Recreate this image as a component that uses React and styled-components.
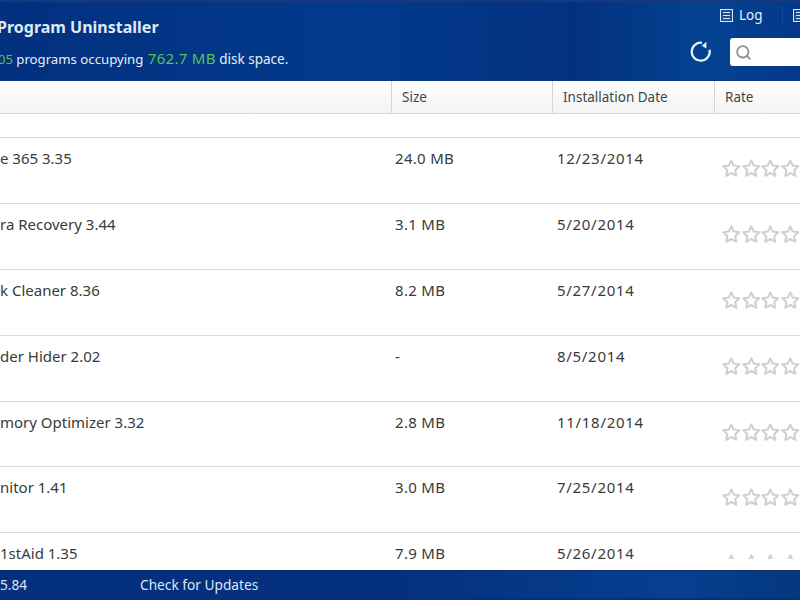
import React from "react";
import styled, { createGlobalStyle } from "styled-components";
import { Search } from "lucide-react";

const GlobalStyle = createGlobalStyle`
  html, body { margin: 0; padding: 0; height: 100%; overflow: hidden; background: #fff; }
  body { font-family: "Noto Sans", "DejaVu Sans", sans-serif; }
`;

const Page = styled.div`
  width: 800px;
  height: 600px;
  display: flex;
  flex-direction: column;
  overflow: hidden;
  color: #333;
`;

const Banner = styled.header`
  height: 81px;
  flex: none;
  display: flex;
  justify-content: space-between;
  box-sizing: border-box;
  border-top: 2px solid #17397c;
  border-bottom: 1px solid #0b3a84;
  background: linear-gradient(90deg, #03307f 0%, #023a8c 45%, #03317f 72%, #044391 88%, #03388a 100%);
  color: #e6eef8;
`;

const Titles = styled.div`
  display: flex;
  flex-direction: column;
  padding-top: 15px;
`;

const Title = styled.h1`
  margin: 0 0 0 -3px;
  font-size: 16px;
  line-height: 20px;
  font-weight: 700;
  color: #dfe9f5;
`;

const Summary = styled.div`
  margin-top: 12px;
  font-size: 13.2px;
  line-height: 18px;
  white-space: nowrap;
`;

const Green = styled.span`
  color: #55c25a;
  margin-left: ${(p) => (p.$big ? "1px" : "-2px")};
  font-size: ${(p) => (p.$big ? "15px" : "13px")};
  letter-spacing: ${(p) => (p.$big ? "0.3px" : "0")};
`;

const DiskLabel = styled.span`
  font-size: 13.5px;
`;

const Tools = styled.div`
  width: 80px;
  flex: none;
  display: flex;
  flex-direction: column;
  align-items: flex-start;
  padding-top: 5px;
`;

const Links = styled.div`
  display: flex;
  align-items: center;
  height: 16px;
`;

const LinkItem = styled.span`
  display: flex;
  align-items: center;
  gap: 6px;
  font-size: 13.5px;
  line-height: 16px;
  white-space: nowrap;
`;

const LinkDivider = styled.span`
  width: 1px;
  height: 18px;
  margin: 0 10px 0 19px;
  background: #1a4a94;
`;

const SearchRow = styled.div`
  display: flex;
  align-items: center;
  gap: 18px;
  margin-top: 15px;
  margin-left: -30px;
`;

const SearchBox = styled.div`
  width: 70px;
  height: 28px;
  flex: none;
  display: flex;
  align-items: center;
  padding-left: 5px;
  box-sizing: border-box;
  background: #fff;
  border-radius: 3px 0 0 3px;
  color: #8f8f88;
`;

const Grid = styled.div`
  flex: 1;
  min-height: 0;
  overflow: hidden;
`;

const HeadRow = styled.div`
  height: 33px;
  box-sizing: border-box;
  display: grid;
  grid-template-columns: 391px 161px 162px 86px;
  background: linear-gradient(#fff, #f3f3f3);
  border-bottom: 1px solid #d8d8d8;
`;

const HeadCell = styled.div`
  border-left: ${(p) => (p.$first ? "0" : "1px solid #d5d5d5")};
  padding-left: 10px;
  font-size: 13.5px;
  line-height: 33px;
  color: #444;
`;

const Spacer = styled.div`
  height: 23px;
  border-bottom: 1px solid #dcdcdc;
`;

const Row = styled.div`
  height: 65.9px;
  box-sizing: border-box;
  display: grid;
  grid-template-columns: 395px 162px 165px 78px;
  align-items: start;
  border-bottom: 1px solid #dcdcdc;
  overflow: hidden;
  font-size: 15px;
  line-height: 20px;
  color: #3a3a3a;
`;

const Cell = styled.div`
  padding-top: 10px;
  white-space: nowrap;
  letter-spacing: ${(p) => p.$spacing || "0"};
`;

const Stars = styled.div`
  display: flex;
  padding-top: 20px;
`;

const BottomGap = styled.div`
  height: 11px;
  flex: none;
  background: #fff;
`;

const Footer = styled.footer`
  height: 30px;
  flex: none;
  display: flex;
  align-items: center;
  box-sizing: border-box;
  border-top: 1px solid #0c2f72;
  border-bottom: 2px solid #0a2f78;
  background: linear-gradient(90deg, #04307f 0%, #04307f 50%, #05408f 85%, #04377f 100%);
  color: #dbe6f3;
  font-size: 13.7px;
`;

const Version = styled.span`
  width: 140px;
`;

const StarIcon = () => (
  <svg width="21" height="20" viewBox="0 0 21 20" fill="#fff" stroke="#d0d0d0" strokeWidth="2.2" strokeLinejoin="round">
    <path d="M10 1.8l2.6 5.6 6 .8-4.4 4.2 1.2 6-5.4-3-5.4 3 1.2-6L1.4 8.2l6-.8z" />
  </svg>
);

const LogIcon = () => (
  <svg width="13" height="13" viewBox="0 0 13 13" fill="none" stroke="#dbe6f3">
    <rect x="0.5" y="0.5" width="12" height="12" fill="#1b4f9c" />
    <path d="M3 3.5h7M3 6.5h7M3 9.5h7" />
  </svg>
);

const RefreshIcon = () => (
  <svg width="22" height="22" viewBox="0 0 22 22" fill="none">
    <path d="M19.5 8.7A9 9 0 1 1 12 1.8" stroke="#e8f0f8" strokeWidth="2.2" />
    <path d="M11.7 4.7L16.4.7v6.8z" fill="#e8f0f8" />
  </svg>
);

const rows = [
  { name: "e 365 3.35", size: "24.0 MB", date: "12/23/2014" },
  { name: "ra Recovery 3.44", size: "3.1 MB", date: "5/20/2014" },
  { name: "k Cleaner 8.36", size: "8.2 MB", date: "5/27/2014" },
  { name: "der Hider 2.02", size: "-", date: "8/5/2014" },
  { name: "mory Optimizer 3.32", size: "2.8 MB", date: "11/18/2014" },
  { name: "nitor 1.41", size: "3.0 MB", date: "7/25/2014" },
  { name: "1stAid 1.35", size: "7.9 MB", date: "5/26/2014" },
];

export default function App() {
  return (
    <Page>
      <GlobalStyle />
      <Banner>
        <Titles>
          <Title>Program Uninstaller</Title>
          <Summary>
            <Green>05</Green> programs occupying <Green $big>762.7 MB</Green> <DiskLabel>disk space.</DiskLabel>
          </Summary>
        </Titles>
        <Tools>
          <Links>
            <LinkItem>
              <LogIcon /> Log
            </LinkItem>
            <LinkDivider />
            <LogIcon />
          </Links>
          <SearchRow>
            <RefreshIcon />
            <SearchBox>
              <Search size={17} strokeWidth={2.6} />
            </SearchBox>
          </SearchRow>
        </Tools>
      </Banner>
      <Grid>
        <HeadRow>
          <HeadCell $first />
          <HeadCell>Size</HeadCell>
          <HeadCell>Installation Date</HeadCell>
          <HeadCell>Rate</HeadCell>
        </HeadRow>
        <Spacer />
        {rows.map((r) => (
          <Row key={r.name}>
            <Cell>{r.name}</Cell>
            <Cell $spacing="0.3px">{r.size}</Cell>
            <Cell $spacing="0.7px">{r.date}</Cell>
            <Stars>
              <StarIcon />
              <StarIcon />
              <StarIcon />
              <StarIcon />
            </Stars>
          </Row>
        ))}
      </Grid>
      <BottomGap />
      <Footer>
        <Version>5.84</Version>
        <span>Check for Updates</span>
      </Footer>
    </Page>
  );
}
